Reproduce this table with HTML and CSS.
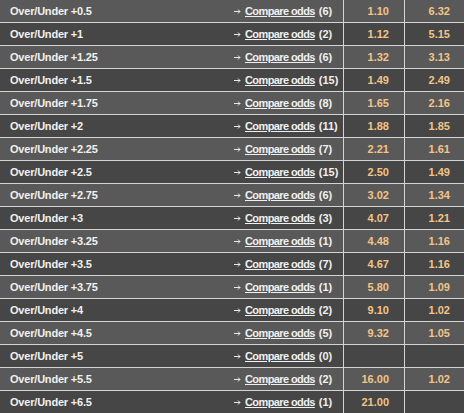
FILE: index.html
```html
<!DOCTYPE html>
<html>
<head>
<meta charset="utf-8">
<link rel="stylesheet" href="styles.css">
</head>
<body>
<div class="odds">
  <div class="row a"><div class="name">Over/Under +0.5</div><div class="cmp"><svg class="arr" width="7" height="5" viewBox="0 0 7 5"><path d="M0 2.5H6M4 0.5L6 2.5L4 4.5" fill="none" stroke="#e8e8e8" stroke-width="1"/></svg><a href="#">Compare odds</a> (6)</div><div class="o o1">1.10</div><div class="o o2">6.32</div></div>
  <div class="row b"><div class="name">Over/Under +1</div><div class="cmp"><svg class="arr" width="7" height="5" viewBox="0 0 7 5"><path d="M0 2.5H6M4 0.5L6 2.5L4 4.5" fill="none" stroke="#e8e8e8" stroke-width="1"/></svg><a href="#">Compare odds</a> (2)</div><div class="o o1">1.12</div><div class="o o2">5.15</div></div>
  <div class="row a"><div class="name">Over/Under +1.25</div><div class="cmp"><svg class="arr" width="7" height="5" viewBox="0 0 7 5"><path d="M0 2.5H6M4 0.5L6 2.5L4 4.5" fill="none" stroke="#e8e8e8" stroke-width="1"/></svg><a href="#">Compare odds</a> (6)</div><div class="o o1">1.32</div><div class="o o2">3.13</div></div>
  <div class="row b"><div class="name">Over/Under +1.5</div><div class="cmp"><svg class="arr" width="7" height="5" viewBox="0 0 7 5"><path d="M0 2.5H6M4 0.5L6 2.5L4 4.5" fill="none" stroke="#e8e8e8" stroke-width="1"/></svg><a href="#">Compare odds</a> (15)</div><div class="o o1">1.49</div><div class="o o2">2.49</div></div>
  <div class="row a"><div class="name">Over/Under +1.75</div><div class="cmp"><svg class="arr" width="7" height="5" viewBox="0 0 7 5"><path d="M0 2.5H6M4 0.5L6 2.5L4 4.5" fill="none" stroke="#e8e8e8" stroke-width="1"/></svg><a href="#">Compare odds</a> (8)</div><div class="o o1">1.65</div><div class="o o2">2.16</div></div>
  <div class="row b"><div class="name">Over/Under +2</div><div class="cmp"><svg class="arr" width="7" height="5" viewBox="0 0 7 5"><path d="M0 2.5H6M4 0.5L6 2.5L4 4.5" fill="none" stroke="#e8e8e8" stroke-width="1"/></svg><a href="#">Compare odds</a> (11)</div><div class="o o1">1.88</div><div class="o o2">1.85</div></div>
  <div class="row a"><div class="name">Over/Under +2.25</div><div class="cmp"><svg class="arr" width="7" height="5" viewBox="0 0 7 5"><path d="M0 2.5H6M4 0.5L6 2.5L4 4.5" fill="none" stroke="#e8e8e8" stroke-width="1"/></svg><a href="#">Compare odds</a> (7)</div><div class="o o1">2.21</div><div class="o o2">1.61</div></div>
  <div class="row b"><div class="name">Over/Under +2.5</div><div class="cmp"><svg class="arr" width="7" height="5" viewBox="0 0 7 5"><path d="M0 2.5H6M4 0.5L6 2.5L4 4.5" fill="none" stroke="#e8e8e8" stroke-width="1"/></svg><a href="#">Compare odds</a> (15)</div><div class="o o1">2.50</div><div class="o o2">1.49</div></div>
  <div class="row a"><div class="name">Over/Under +2.75</div><div class="cmp"><svg class="arr" width="7" height="5" viewBox="0 0 7 5"><path d="M0 2.5H6M4 0.5L6 2.5L4 4.5" fill="none" stroke="#e8e8e8" stroke-width="1"/></svg><a href="#">Compare odds</a> (6)</div><div class="o o1">3.02</div><div class="o o2">1.34</div></div>
  <div class="row b"><div class="name">Over/Under +3</div><div class="cmp"><svg class="arr" width="7" height="5" viewBox="0 0 7 5"><path d="M0 2.5H6M4 0.5L6 2.5L4 4.5" fill="none" stroke="#e8e8e8" stroke-width="1"/></svg><a href="#">Compare odds</a> (3)</div><div class="o o1">4.07</div><div class="o o2">1.21</div></div>
  <div class="row a"><div class="name">Over/Under +3.25</div><div class="cmp"><svg class="arr" width="7" height="5" viewBox="0 0 7 5"><path d="M0 2.5H6M4 0.5L6 2.5L4 4.5" fill="none" stroke="#e8e8e8" stroke-width="1"/></svg><a href="#">Compare odds</a> (1)</div><div class="o o1">4.48</div><div class="o o2">1.16</div></div>
  <div class="row b"><div class="name">Over/Under +3.5</div><div class="cmp"><svg class="arr" width="7" height="5" viewBox="0 0 7 5"><path d="M0 2.5H6M4 0.5L6 2.5L4 4.5" fill="none" stroke="#e8e8e8" stroke-width="1"/></svg><a href="#">Compare odds</a> (7)</div><div class="o o1">4.67</div><div class="o o2">1.16</div></div>
  <div class="row a"><div class="name">Over/Under +3.75</div><div class="cmp"><svg class="arr" width="7" height="5" viewBox="0 0 7 5"><path d="M0 2.5H6M4 0.5L6 2.5L4 4.5" fill="none" stroke="#e8e8e8" stroke-width="1"/></svg><a href="#">Compare odds</a> (1)</div><div class="o o1">5.80</div><div class="o o2">1.09</div></div>
  <div class="row b"><div class="name">Over/Under +4</div><div class="cmp"><svg class="arr" width="7" height="5" viewBox="0 0 7 5"><path d="M0 2.5H6M4 0.5L6 2.5L4 4.5" fill="none" stroke="#e8e8e8" stroke-width="1"/></svg><a href="#">Compare odds</a> (2)</div><div class="o o1">9.10</div><div class="o o2">1.02</div></div>
  <div class="row a"><div class="name">Over/Under +4.5</div><div class="cmp"><svg class="arr" width="7" height="5" viewBox="0 0 7 5"><path d="M0 2.5H6M4 0.5L6 2.5L4 4.5" fill="none" stroke="#e8e8e8" stroke-width="1"/></svg><a href="#">Compare odds</a> (5)</div><div class="o o1">9.32</div><div class="o o2">1.05</div></div>
  <div class="row b"><div class="name">Over/Under +5</div><div class="cmp"><svg class="arr" width="7" height="5" viewBox="0 0 7 5"><path d="M0 2.5H6M4 0.5L6 2.5L4 4.5" fill="none" stroke="#e8e8e8" stroke-width="1"/></svg><a href="#">Compare odds</a> (0)</div><div class="o o1"></div><div class="o o2"></div></div>
  <div class="row a"><div class="name">Over/Under +5.5</div><div class="cmp"><svg class="arr" width="7" height="5" viewBox="0 0 7 5"><path d="M0 2.5H6M4 0.5L6 2.5L4 4.5" fill="none" stroke="#e8e8e8" stroke-width="1"/></svg><a href="#">Compare odds</a> (2)</div><div class="o o1">16.00</div><div class="o o2">1.02</div></div>
  <div class="row b"><div class="name">Over/Under +6.5</div><div class="cmp"><svg class="arr" width="7" height="5" viewBox="0 0 7 5"><path d="M0 2.5H6M4 0.5L6 2.5L4 4.5" fill="none" stroke="#e8e8e8" stroke-width="1"/></svg><a href="#">Compare odds</a> (1)</div><div class="o o1">21.00</div><div class="o o2"></div></div>
</div>
</body>
</html>
```
FILE: styles.css
```css
html, body {
  margin: 0;
  padding: 0;
  background: #464646;
}
.odds {
  width: 464px;
  font-family: "Liberation Sans", Arial, sans-serif;
  font-weight: bold;
  font-size: 11px;
  color: #f0f0f0;
}
.row {
  display: grid;
  grid-template-columns: 230px 113px 61px 60px;
  height: 22px;
  line-height: 22px;
}
.row + .row {
  border-top: 1px solid #d4d4d4;
}
.row.a { background: #595959; }
.row.b { background: #464646; }
.row > div {
  box-sizing: border-box;
  white-space: nowrap;
  overflow: hidden;
}
.name {
  padding-left: 10px;
  letter-spacing: -0.2px;
}
.cmp {
  padding-left: 4px;
  display: flex;
  align-items: center;
}
.arr {
  margin-right: 4px;
  flex: none;
}
.cmp a {
  color: #f0f0f0;
  text-decoration: underline;
  letter-spacing: -0.6px;
  margin-right: 4px;
}
.o {
  text-align: right;
  color: #f4c487;
  border-left: 1px solid #d4d4d4;
}
.o1 { padding-right: 15px; }
.o2 { padding-right: 14px; }
```
